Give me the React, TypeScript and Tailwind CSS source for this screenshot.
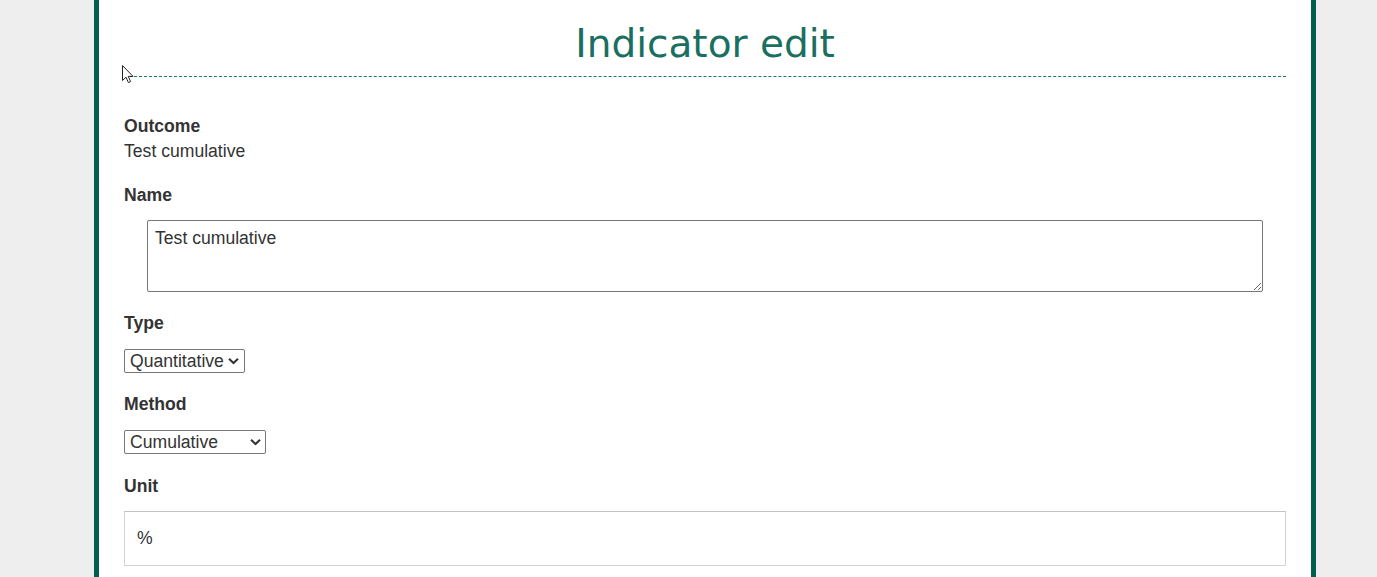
import React from "react";

function Chevron({ right }: { right: string }) {
  return (
    <svg width="11" height="7" viewBox="0 0 11 7" className={`pointer-events-none absolute top-1/2 -translate-y-1/2 ${right}`}>
      <path d="M1 1.2 L5.5 5.5 L10 1.2" fill="none" stroke="#333" strokeWidth="2" />
    </svg>
  );
}

export default function App() {
  return (
    <div className="min-h-screen bg-[#eeeeee] font-['Liberation_Sans',Arial,sans-serif] text-[17.6px] text-[#333]">
      <div className="relative ml-[94px] min-h-screen w-[1222px] border-x-[5px] border-[#005e4f] bg-white px-[25px]">
        <h1 className="border-b border-dashed border-[#1a7a68] pb-[10px] pt-[21px] text-center font-['DejaVu_Sans',Verdana,sans-serif] text-[39px] font-normal leading-[45px] text-[#1b6f61]">
          Indicator edit
        </h1>

        <div className="mt-[37px] leading-[25px]">
          <div className="font-bold">Outcome</div>
          <div>Test cumulative</div>
        </div>

        <label className="mt-[19px] block font-bold leading-[25px]">Name</label>
        <textarea
          className="mt-[12px] ml-[23px] block h-[72px] w-[1116px] rounded-[2px] border border-[#767676] px-[7px] pb-[6px] pt-[4px] text-[17.6px] leading-normal text-[#333] outline-none"
          defaultValue="Test cumulative"
        />

        <label className="mt-[19px] block font-bold leading-[25px]">Type</label>
        <div className="relative mt-[13px] h-[24px] w-[121px]">
          <select className="block h-[24px] w-[121px] appearance-none rounded-[2px] border border-[#767676] pl-[5px] text-[17.6px] leading-[22px] text-[#333] outline-none">
            <option>Quantitative</option>
          </select>
          <Chevron right="right-[6px]" />
        </div>

        <label className="mt-[19px] block font-bold leading-[25px]">Method</label>
        <div className="relative mt-[13px] h-[24px] w-[142px]">
          <select className="block h-[24px] w-[142px] appearance-none rounded-[2px] border border-[#767676] pl-[5px] text-[17.6px] leading-[22px] text-[#333] outline-none">
            <option>Cumulative</option>
          </select>
          <Chevron right="right-[5px]" />
        </div>

        <label className="mt-[20px] block font-bold leading-[25px]">Unit</label>
        <input
          className="mt-[12px] block h-[55px] w-full border border-[#d4d4d4] border-t-[#c2c2c2] px-[12px] text-[17.6px] text-[#333] outline-none"
          defaultValue="%"
        />

        <svg
          width="13"
          height="20"
          viewBox="0 0 13 20"
          className="absolute left-[23px] top-[65px]"
        >
          <path
            d="M0.5 0.5 L0.5 15.5 L4 12.2 L6.4 17.6 L8.6 16.6 L6.3 11.4 L11 11.4 Z"
            fill="#fff"
            stroke="#222"
            strokeWidth="1"
            strokeLinejoin="miter"
          />
        </svg>
      </div>
    </div>
  );
}
